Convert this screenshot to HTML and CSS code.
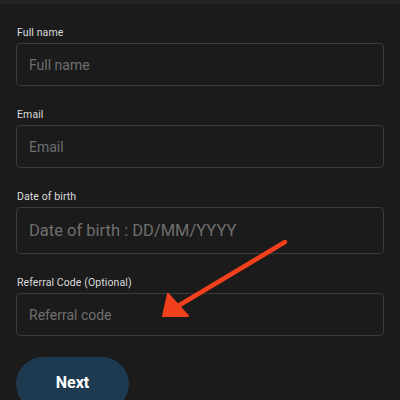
FILE: index.html
```html
<!DOCTYPE html>
<html>
<head>
<meta charset="utf-8">
<link rel="stylesheet" href="styles.css">
</head>
<body>
<div class="topbar"></div>
<form class="form">
  <div class="field">
    <label class="label">Full name</label>
    <div class="input"><span class="ph">Full name</span></div>
  </div>
  <div class="field">
    <label class="label">Email</label>
    <div class="input"><span class="ph">Email</span></div>
  </div>
  <div class="field">
    <label class="label">Date of birth</label>
    <div class="input tall"><span class="ph big">Date of birth : DD/MM/YYYY</span></div>
  </div>
  <div class="field">
    <label class="label">Referral Code (Optional)</label>
    <div class="input"><span class="ph">Referral code</span></div>
  </div>
  <button type="button" class="next">Next</button>
</form>
<svg class="arrow" width="400" height="400" viewBox="0 0 400 400">
  <line x1="285" y1="242" x2="178" y2="306" stroke="#f2401c" stroke-width="4.5" stroke-linecap="round"/>
  <polygon points="163,316 168,294 188,316" fill="#f2401c" stroke="#f2401c" stroke-width="2" stroke-linejoin="round"/>
</svg>
</body>
</html>
```
FILE: styles.css
```css
html, body {
  margin: 0;
  padding: 0;
  background: #1b1b1b;
  width: 400px;
  height: 400px;
  overflow: hidden;
  font-family: Roboto, "Liberation Sans", sans-serif;
}
.topbar {
  height: 4px;
  background: #202324;
}
.form {
  display: flex;
  flex-direction: column;
  padding: 23px 16px 0 16px;
}
.field {
  display: flex;
  flex-direction: column;
  margin-bottom: 23px;
}
.label {
  font-size: 10.5px;
  font-weight: 400;
  color: #dcdcdc;
  margin-left: 1px;
  margin-bottom: 4px;
  line-height: 12px;
  letter-spacing: 0.1px;
}
.input {
  height: 41px;
  border: 1px solid #3a3a3a;
  border-radius: 4px;
  display: flex;
  align-items: center;
  padding-left: 12px;
  box-sizing: content-box;
  width: 354px;
}
.input.tall {
  height: 45px;
}
.ph {
  color: #6f6f6f;
  font-size: 14px;
}
.ph.big {
  font-size: 16.5px;
}
.next {
  margin-top: -2px;
  width: 113px;
  height: 54px;
  border: none;
  border-radius: 27px;
  background: #1e3a51;
  color: #ffffff;
  font-family: Roboto, "Liberation Sans", sans-serif;
  font-weight: 700;
  font-size: 16px;
  padding: 0 0 3px 0;
}
.arrow {
  position: absolute;
  left: 0;
  top: 0;
  pointer-events: none;
}
```
